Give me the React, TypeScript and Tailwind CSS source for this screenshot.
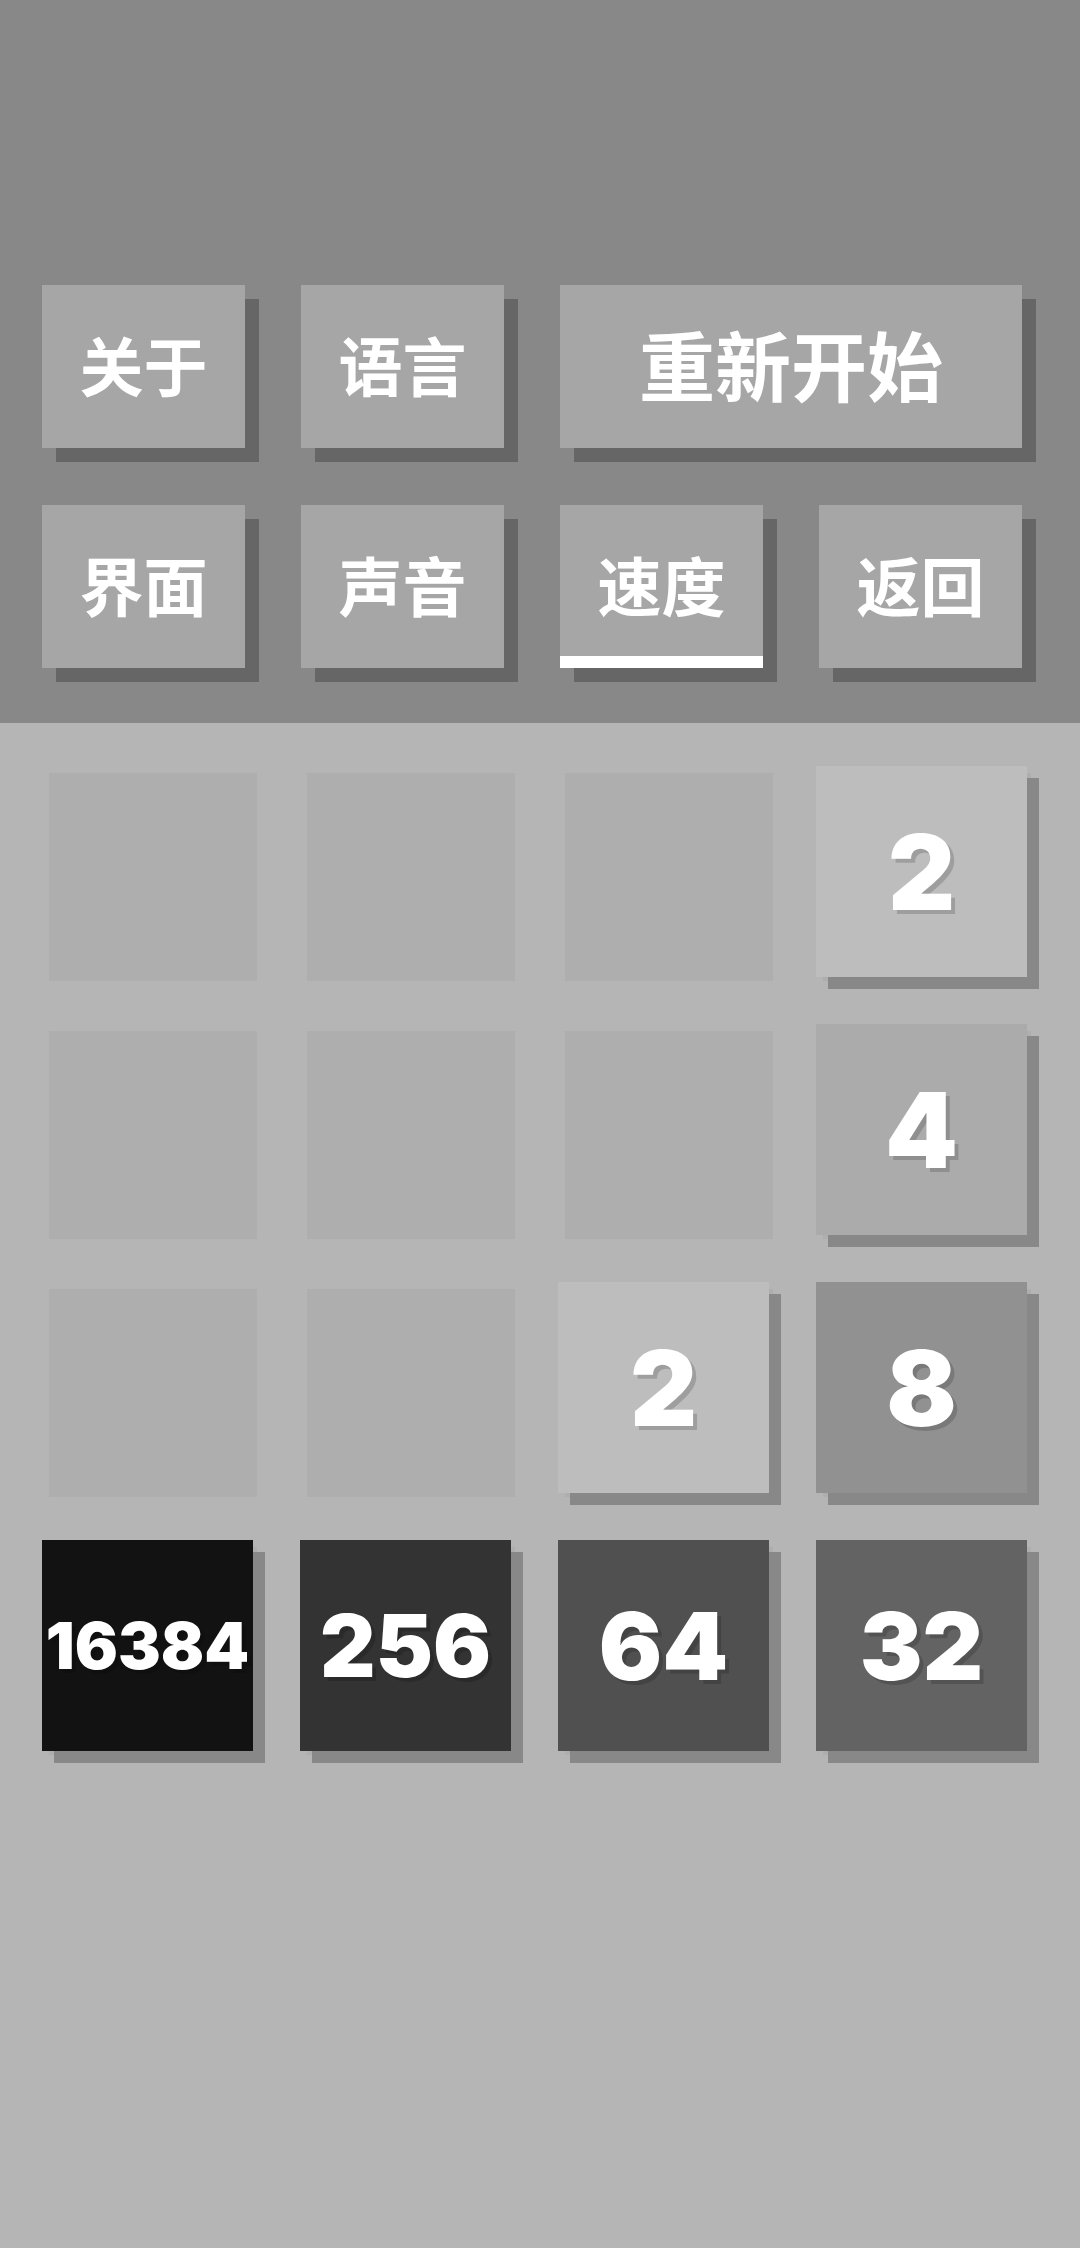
import React from 'react';

type Btn = { label: string; span?: boolean; active?: boolean; big?: boolean };

const buttons: Btn[] = [
    { label: '关于' },
    { label: '语言' },
    { label: '重新开始', span: true, big: true },
    { label: '界面' },
    { label: '声音' },
    { label: '速度', active: true },
    { label: '返回' },
];

// 0 = empty cell
const board: number[][] = [
    [0, 0, 0, 2],
    [0, 0, 0, 4],
    [0, 0, 2, 8],
    [16384, 256, 64, 32],
];

const tileBg: Record<number, string> = {
    2: 'bg-[#bdbdbd]',
    4: 'bg-[#ababab]',
    8: 'bg-[#919191]',
    32: 'bg-[#636363]',
    64: 'bg-[#505050]',
    256: 'bg-[#333333]',
    16384: 'bg-[#121212]',
};

const textSize = (v: number) => {
    const len = String(v).length;
    if (len === 1) return 'text-[104px]';
    if (len === 2) return 'text-[94px]';
    if (len === 3) return 'text-[86px]';
    return 'text-[64px]';
};

const MenuButton: React.FC<{ btn: Btn }> = ({ btn }) => (
    <button
        className={`${btn.span ? 'col-span-2' : ''} h-[163px] bg-[#a6a6a6] text-white font-bold flex items-center justify-center pb-[8px] ${btn.big ? 'text-[76px]' : 'text-[64px]'} ${btn.active ? 'shadow-[inset_0_-12px_0_#ffffff,14px_14px_0_#666666]' : 'shadow-[14px_14px_0_#666666]'}`}
        style={{ fontFamily: '"Noto Sans CJK SC", "Noto Sans", sans-serif' }}
    >
        <span className="leading-none">{btn.label}</span>
    </button>
);

const Cell: React.FC<{ value: number }> = ({ value }) => (
    <div className="relative w-[208px] h-[208px] bg-[#aeaeae]">
        {value > 0 && (
            <div
                className={`absolute -left-[7px] -top-[7px] w-[211px] h-[211px] ${tileBg[value]} shadow-[12px_12px_0_#888888] flex items-center justify-center text-white font-black leading-none ${textSize(value)} [text-shadow:4px_4px_0_rgba(0,0,0,0.16)]`}
                style={{ fontFamily: 'Inter, Lato, "Liberation Sans", sans-serif' }}
            >
                {value}
            </div>
        )}
    </div>
);

export default function App() {
    return (
        <div className="w-[1080px] min-h-[2248px] bg-[#b5b5b5]">
            {/* menu */}
            <div className="bg-[#888888] h-[723px] pt-[285px] pl-[42px] pr-[58px]">
                <div className="grid grid-cols-4 gap-x-[56px] gap-y-[57px]">
                    {buttons.map((b) => (
                        <MenuButton key={b.label} btn={b} />
                    ))}
                </div>
            </div>

            {/* board */}
            <div className="px-[49px] pt-[50px]">
                <div className="grid grid-cols-4 gap-[50px]">
                    {board.flat().map((v, i) => (
                        <Cell key={i} value={v} />
                    ))}
                </div>
            </div>
        </div>
    );
}
